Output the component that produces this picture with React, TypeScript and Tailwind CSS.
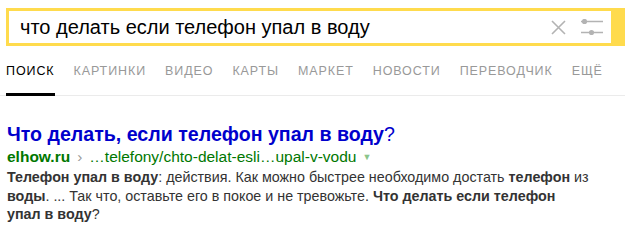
import React from "react";

export default function App() {
  const tabs = ["КАРТИНКИ", "ВИДЕО", "КАРТЫ", "МАРКЕТ", "НОВОСТИ", "ПЕРЕВОДЧИК", "ЕЩЁ"];
  return (
    <div className="w-[625px] h-[241px] bg-white overflow-hidden" style={{ fontFamily: '"Liberation Sans", Arial, sans-serif' }}>
      <div className="pt-[8px] pl-[6px] flex">
        <div className="flex-1 h-[38px] border-[3px] border-r-0 border-[#ffdb4d] bg-white flex items-center">
          <div className="flex-1 pl-[11px] text-[20px] text-black leading-none pb-[1px]">что делать если телефон упал в воду</div>
          <svg width="15" height="15" viewBox="0 0 15 15" className="mr-[15px]">
            <path d="M1 1L14 14M14 1L1 14" stroke="#b3b3b3" strokeWidth="1.6" />
          </svg>
          <svg width="22" height="16" viewBox="0 0 22 16" className="mr-[8px]">
            <path d="M0 2.5H22M0 13.5H22" stroke="#b3b3b3" strokeWidth="1.4" />
            <circle cx="3.5" cy="2.5" r="2.6" fill="#b3b3b3" />
            <circle cx="10.5" cy="13.5" r="2.6" fill="#b3b3b3" />
          </svg>
        </div>
        <div className="w-[14px] h-[38px] bg-[#ffdb4d]" />
      </div>
      <div className="mt-[17px] flex border-b border-[#ebebeb] pl-[6px]">
        <div className="pb-[14px] border-b-[3px] border-black -mb-px text-[12.5px] tracking-[0.9px] text-black leading-[16px]">ПОИСК</div>
        {tabs.map((t) => (
          <div key={t} className="ml-[19px] pb-[14px] text-[12.5px] tracking-[0.9px] text-[#999] leading-[16px]">{t}</div>
        ))}
      </div>
      <div className="pl-[7px] pt-[27px]">
        <div className="text-[19.6px] leading-[22px] text-[#0000cc]">
          <span className="font-bold">Что делать, если телефон упал в воду</span>?
        </div>
        <div className="text-[15.5px] leading-[18px] text-[#007700] mt-[3px] flex items-center">
          <span className="font-bold">elhow.ru</span>
          <span className="text-[#999] mx-[7px]">›</span>
          <span>…telefony/chto-delat-esli…upal-v-vodu</span>
          <span className="ml-[6px] text-[#8bc58b] text-[9px]">▼</span>
        </div>
        <div className="w-[590px] text-[14.3px] leading-[18.5px] text-[#333] mt-[2px]">
          <b>Телефон упал в воду</b>: действия. Как можно быстрее необходимо достать <b>телефон</b> из <b>воды</b>. ... Так что, оставьте его в покое и не тревожьте. <b>Что делать если телефон</b>
          <br />
          <b>упал в воду</b>?
        </div>
      </div>
    </div>
  );
}
